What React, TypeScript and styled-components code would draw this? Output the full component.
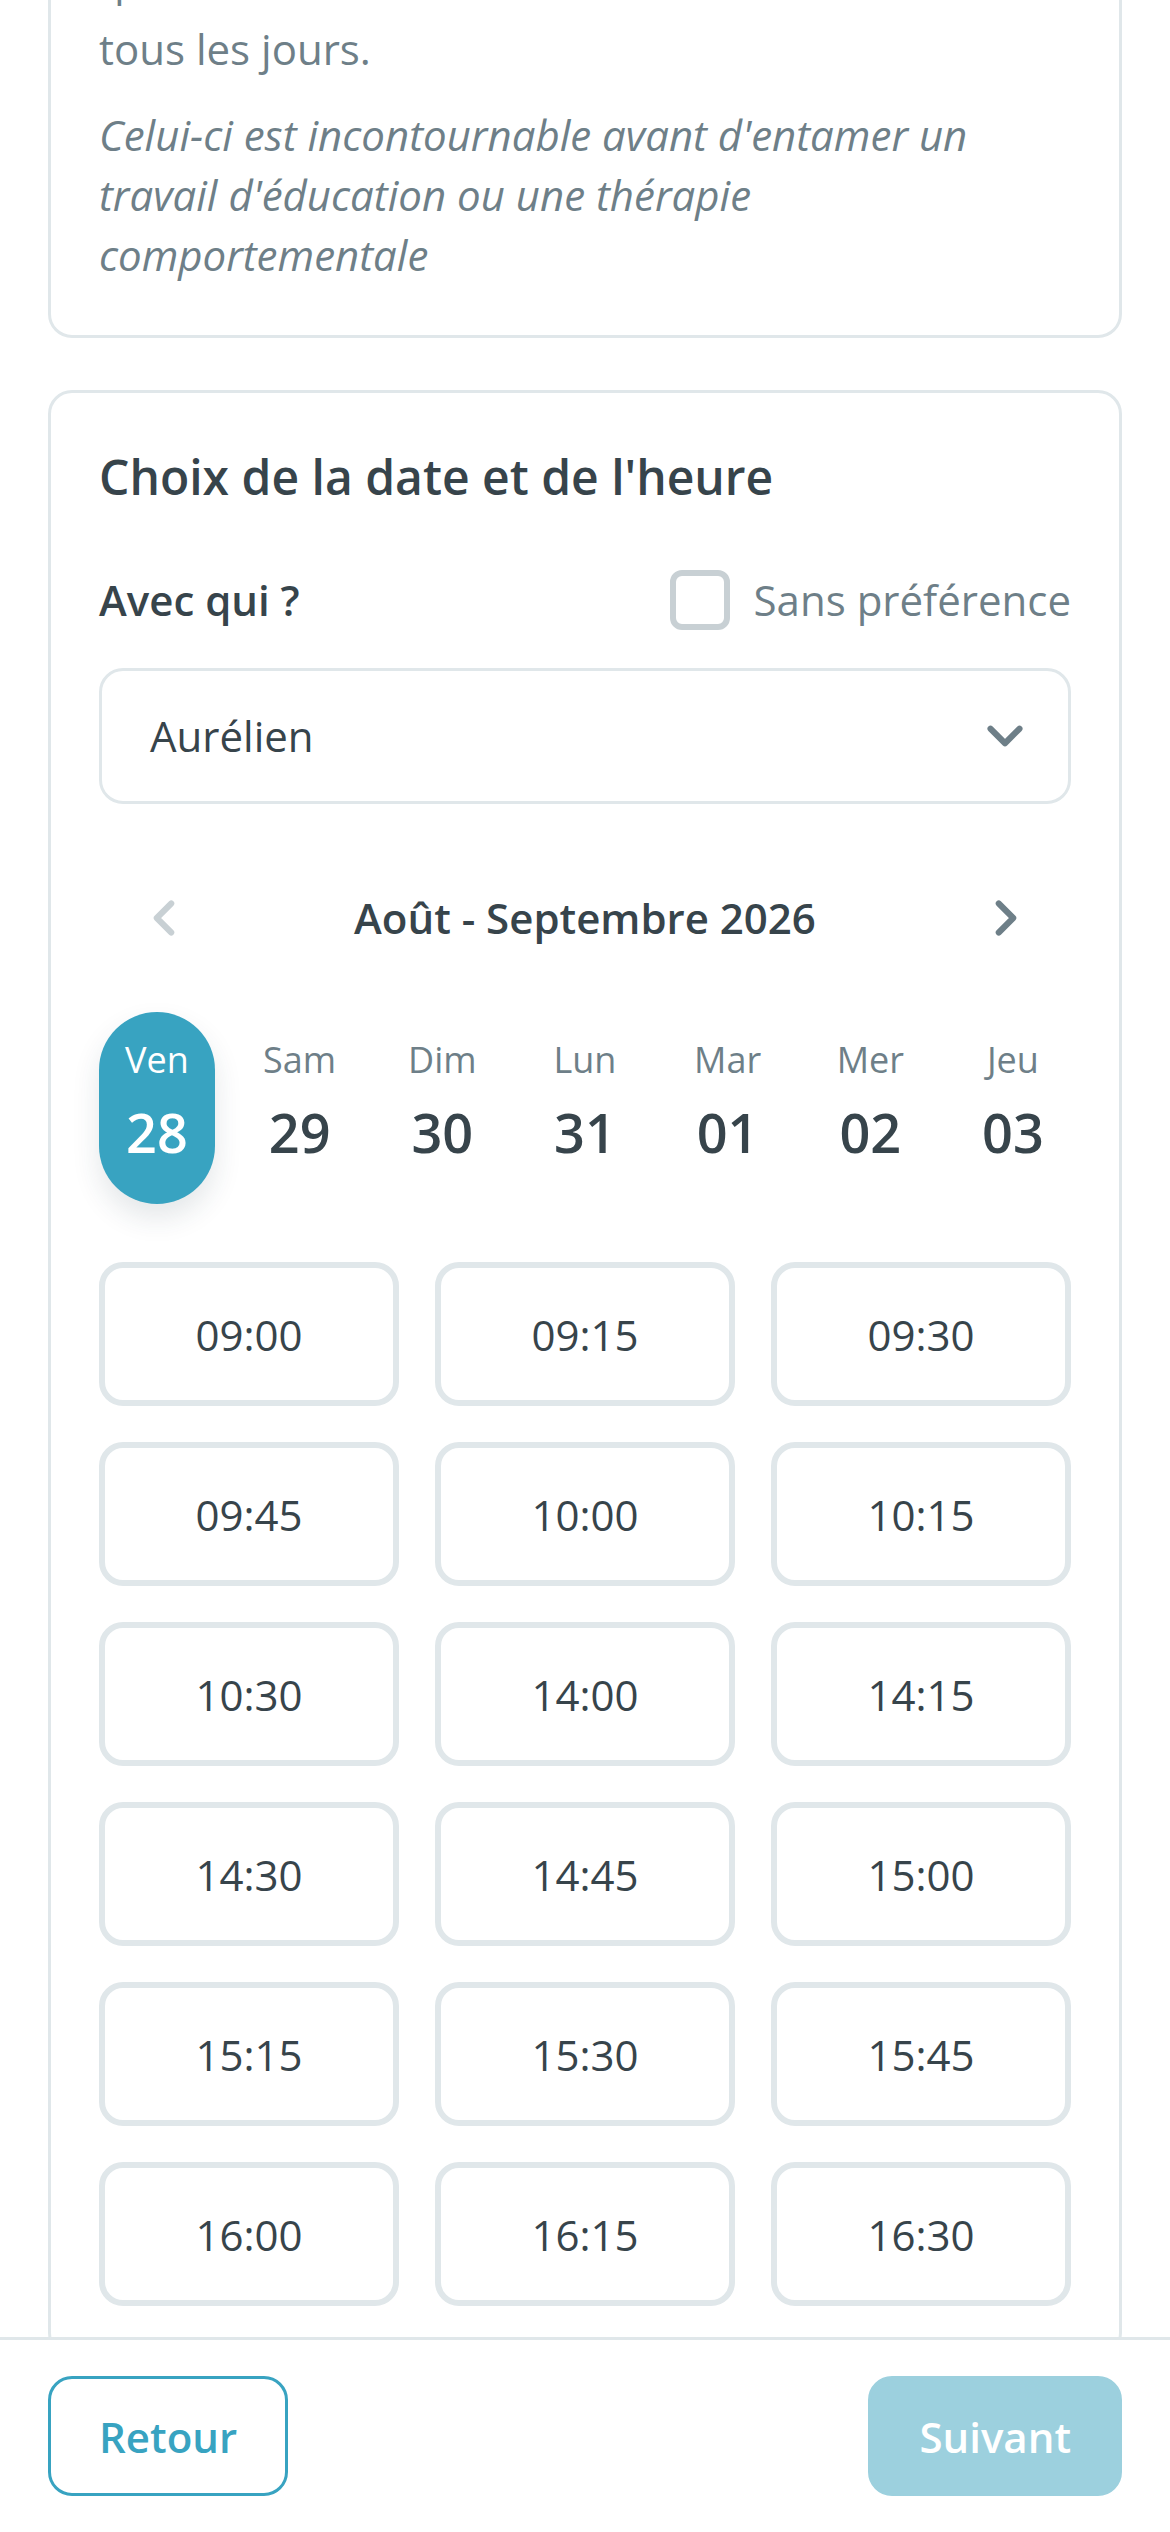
import React from 'react';
import styled, { createGlobalStyle } from 'styled-components';

const GlobalStyle = createGlobalStyle`
  html, body {
    margin: 0;
    padding: 0;
    background: #ffffff;
    overflow: hidden;
  }
  body {
    font-family: 'Open Sans', 'Noto Sans', sans-serif;
    color: #37444b;
  }
  * {
    box-sizing: border-box;
  }
`;

const teal = '#38a3c1';
const dark = '#37444b';
const grey = '#6e7f88';
const line = '#e0e7ea';

// the page is scrolled: the top of the first card sits above the viewport
const Page = styled.div`
  display: flex;
  flex-direction: column;
  gap: 52px;
  padding: 0 48px;
  margin-top: -175px;
`;

const Card = styled.section<{ $pad?: string }>`
  background: #ffffff;
  border: 3px solid ${line};
  border-radius: 24px;
  padding: ${(p) => p.$pad || '48px'};
`;

const Text = styled.p<{ $italic?: boolean; $lh?: number; $gap?: number }>`
  margin: 0 0 ${(p) => p.$gap ?? 26}px;
  font-size: 42px;
  line-height: ${(p) => p.$lh ?? 60}px;
  color: ${grey};
  font-style: ${(p) => (p.$italic ? 'italic' : 'normal')};

  &:last-child {
    margin-bottom: 0;
  }
`;

const Title = styled.h2`
  margin: 0 0 61px;
  font-size: 48px;
  line-height: 64px;
  font-weight: 600;
  color: ${dark};
`;

const WithRow = styled.div`
  display: flex;
  align-items: center;
  justify-content: space-between;
  height: 60px;
`;

const Label = styled.span`
  font-size: 42px;
  line-height: 60px;
  font-weight: 600;
  color: ${dark};
`;

const CheckLabel = styled.label`
  display: flex;
  align-items: center;
  gap: 24px;
  font-size: 42px;
  line-height: 60px;
  color: ${grey};
`;

const CheckBox = styled.span`
  width: 60px;
  height: 60px;
  border: 6px solid #c8d0d4;
  border-radius: 12px;
  background: #ffffff;
`;

const Select = styled.div`
  margin-top: 38px;
  height: 136px;
  display: flex;
  align-items: center;
  justify-content: space-between;
  padding: 0 34px 0 48px;
  border: 3px solid ${line};
  border-radius: 24px;
  font-size: 42px;
  line-height: 60px;
  color: ${dark};
`;

const Nav = styled.div`
  margin-top: 84px;
  display: flex;
  align-items: center;
  padding: 0 36px;
  height: 60px;
`;

const NavTitle = styled.div`
  flex: 1;
  text-align: center;
  font-size: 42px;
  line-height: 60px;
  font-weight: 600;
  color: ${dark};
`;

const ArrowButton = styled.span`
  display: flex;
  width: 58px;
  height: 58px;
`;

const Days = styled.div`
  margin-top: 64px;
  display: flex;
  justify-content: space-between;
`;

const Day = styled.div<{ $active?: boolean }>`
  width: 116px;
  height: 192px;
  padding-top: 24px;
  display: flex;
  flex-direction: column;
  align-items: center;
  gap: 12px;
  border-radius: 58px;
  background: ${(p) => (p.$active ? teal : 'transparent')};
  box-shadow: ${(p) => (p.$active ? '0 14px 28px rgba(30, 60, 70, 0.12)' : 'none')};
`;

const DayName = styled.span<{ $active?: boolean }>`
  font-size: 36px;
  line-height: 48px;
  color: ${(p) => (p.$active ? '#ffffff' : grey)};
`;

const DayNumber = styled.span<{ $active?: boolean }>`
  font-size: 54px;
  line-height: 72px;
  font-weight: 600;
  color: ${(p) => (p.$active ? '#ffffff' : dark)};
`;

const Slots = styled.div`
  margin-top: 58px;
  display: grid;
  grid-template-columns: repeat(3, 1fr);
  column-gap: 36px;
  row-gap: 36px;
`;

const Slot = styled.button`
  height: 144px;
  border: 6px solid ${line};
  border-radius: 24px;
  background: #ffffff;
  font-family: inherit;
  font-size: 42px;
  color: ${dark};
  padding: 0;
`;

const Footer = styled.footer`
  position: fixed;
  left: 0;
  right: 0;
  bottom: 0;
  display: flex;
  justify-content: space-between;
  padding: 36px 48px;
  background: #ffffff;
  border-top: 3px solid ${line};
`;

const FooterButton = styled.button<{ $primary?: boolean }>`
  height: 120px;
  padding: 0 48px;
  border-radius: 24px;
  border: 3px solid ${(p) => (p.$primary ? '#9cd0de' : teal)};
  background: ${(p) => (p.$primary ? '#9cd0de' : '#ffffff')};
  color: ${(p) => (p.$primary ? '#ffffff' : teal)};
  font-family: inherit;
  font-size: 42px;
  font-weight: 600;
`;

const Chevron = ({ d, color }: { d: string; color: string }) => (
  <svg width="58" height="58" viewBox="0 0 24 24" fill="none" stroke={color} strokeWidth="2.5" strokeLinecap="round" strokeLinejoin="round">
    <path d={d} />
  </svg>
);

const days = [
  { name: 'Ven', num: '28' },
  { name: 'Sam', num: '29' },
  { name: 'Dim', num: '30' },
  { name: 'Lun', num: '31' },
  { name: 'Mar', num: '01' },
  { name: 'Mer', num: '02' },
  { name: 'Jeu', num: '03' },
];

const slots = [
  '09:00', '09:15', '09:30',
  '09:45', '10:00', '10:15',
  '10:30', '14:00', '14:15',
  '14:30', '14:45', '15:00',
  '15:15', '15:30', '15:45',
  '16:00', '16:15', '16:30',
];

export default function App() {
  return (
    <>
      <GlobalStyle />
      <Page>
        <Card $pad="48px 48px 50px">
          <Text $lh={69} $gap={22}>
            Ce bilan permet d'observer votre chien dans son
            <br />
            quotidien et des situations vécues
            <br />
            tous les jours.
          </Text>
          <Text $italic>
            Celui-ci est incontournable avant d'entamer un travail d'éducation ou une thérapie comportementale
          </Text>
        </Card>

        <Card $pad="52px 48px 48px">
          <Title>Choix de la date et de l'heure</Title>
          <WithRow>
            <Label>Avec qui ?</Label>
            <CheckLabel>
              <CheckBox />
              Sans préférence
            </CheckLabel>
          </WithRow>
          <Select>
            Aurélien
            <Chevron d="M6 9l6 6 6-6" color={grey} />
          </Select>

          <Nav>
            <ArrowButton>
              <Chevron d="M15 18l-6-6 6-6" color="#c8d0d4" />
            </ArrowButton>
            <NavTitle>Août - Septembre 2026</NavTitle>
            <ArrowButton>
              <Chevron d="M9 18l6-6-6-6" color={grey} />
            </ArrowButton>
          </Nav>

          <Days>
            {days.map((day, i) => (
              <Day key={day.num} $active={i === 0}>
                <DayName $active={i === 0}>{day.name}</DayName>
                <DayNumber $active={i === 0}>{day.num}</DayNumber>
              </Day>
            ))}
          </Days>

          <Slots>
            {slots.map((time) => (
              <Slot key={time}>{time}</Slot>
            ))}
          </Slots>
        </Card>
      </Page>

      <Footer>
        <FooterButton>Retour</FooterButton>
        <FooterButton $primary>Suivant</FooterButton>
      </Footer>
    </>
  );
}
